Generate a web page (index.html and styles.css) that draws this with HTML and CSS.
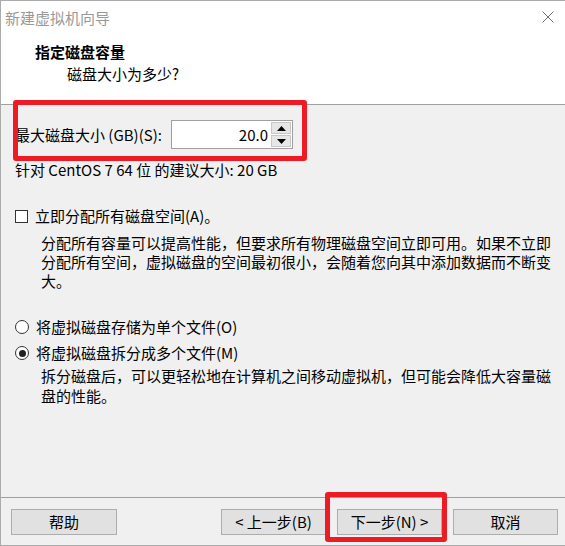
FILE: index.html
```html
<!DOCTYPE html>
<html lang="zh-CN">

<head>
    <meta charset="UTF-8">
    <meta name="viewport" content="width=device-width, initial-scale=1.0">
    <title>新建虚拟机向导</title>
    <link rel="stylesheet" href="styles.css">
</head>

<body>
    <div class="window">
        <div class="head">
            <div class="titlebar">
                <span class="title">新建虚拟机向导</span>
                <svg class="close" width="12" height="12" viewBox="0 0 12 12">
                    <path d="M0.5 0.5 L11.5 11.5 M11.5 0.5 L0.5 11.5" stroke="#707070" stroke-width="1" fill="none" />
                </svg>
            </div>
            <div class="step-title">指定磁盘容量</div>
            <div class="step-sub">磁盘大小为多少?</div>
        </div>

        <div class="content">
            <div class="size-row">
                <label class="size-label">最大磁盘大小 (GB)(S):</label>
                <div class="spin">
                    <div class="spin-value">20.0</div>
                    <div class="spin-btns">
                        <div class="spin-btn">
                            <svg width="9" height="5" viewBox="0 0 9 5"><path d="M0 5 L4.5 0 L9 5 Z" fill="#000" /></svg>
                        </div>
                        <div class="spin-btn">
                            <svg width="9" height="5" viewBox="0 0 9 5"><path d="M0 0 L9 0 L4.5 5 Z" fill="#000" /></svg>
                        </div>
                    </div>
                </div>
            </div>
            <div class="hint">针对 CentOS 7 64 位 的建议大小: 20 GB</div>

            <div class="option check-row">
                <span class="checkbox"></span>
                <span>立即分配所有磁盘空间(A)。</span>
            </div>
            <p class="desc first">分配所有容量可以提高性能，但要求所有物理磁盘空间立即可用。如果不立即<br>分配所有空间，虚拟磁盘的空间最初很小，会随着您向其中添加数据而不断变<br>大。</p>

            <div class="option radio-one">
                <span class="radio"></span>
                <span>将虚拟磁盘存储为单个文件(O)</span>
            </div>
            <div class="option radio-two">
                <span class="radio checked"></span>
                <span>将虚拟磁盘拆分成多个文件(M)</span>
            </div>
            <p class="desc second">拆分磁盘后，可以更轻松地在计算机之间移动虚拟机，但可能会降低大容量磁<br>盘的性能。</p>
        </div>

        <div class="footer">
            <button class="btn help">帮助</button>
            <div class="nav">
                <button class="btn">&lt; 上一步(B)</button>
                <button class="btn">下一步(N) &gt;</button>
                <button class="btn">取消</button>
            </div>
        </div>

        <div class="mark mark-size"></div>
        <div class="mark mark-next"></div>
    </div>
</body>

</html>
```

FILE: styles.css
```css
body {
    margin: 0;
    padding: 0;
    background: #f0f0f0;
    font-family: "Microsoft YaHei", "Noto Sans CJK SC", sans-serif;
    font-size: 15px;
    color: #000;
}

.window {
    position: relative;
    width: 565px;
    height: 546px;
    box-sizing: border-box;
    border-top: 1px solid #ababab;
    border-left: 1px solid #ababab;
    border-bottom: 1px solid #ababab;
    background: #f0f0f0;
    display: flex;
    flex-direction: column;
}

.head {
    background: #fff;
    height: 104px;
    box-sizing: border-box;
    padding-top: 7px;
    border-bottom: 1px solid #a0a0a0;
}

.titlebar {
    display: flex;
    justify-content: space-between;
    align-items: center;
    height: 20px;
    padding-left: 4px;
    padding-right: 11px;
}

.title {
    color: #999;
    line-height: 20px;
}

.close {
    margin-top: -2px;
}

.step-title {
    font-weight: bold;
    line-height: 20px;
    margin-top: 14px;
    padding-left: 34px;
}

.step-sub {
    line-height: 20px;
    margin-top: 2px;
    padding-left: 66px;
}

.content {
    flex: 1;
    padding-left: 14px;
}

.size-row {
    display: flex;
    align-items: center;
    margin-top: 15px;
    height: 29px;
}

.size-label {
    width: 156px;
    line-height: 20px;
}

.spin {
    display: flex;
    width: 122px;
    height: 29px;
    box-sizing: border-box;
    border: 1px solid #a0a0a0;
    background: #fff;
}

.spin-value {
    flex: 1;
    text-align: right;
    line-height: 27px;
    padding-right: 3px;
}

.spin-btns {
    width: 20px;
    display: flex;
    flex-direction: column;
    gap: 1px;
    padding: 1px 1px 1px 0;
}

.spin-btn {
    flex: 1;
    background: #e6e6e6;
    border: 1px solid #c8c8c8;
    display: flex;
    align-items: center;
    justify-content: center;
}

.hint {
    line-height: 20px;
    margin-top: 11px;
}

.option {
    display: flex;
    align-items: center;
    gap: 7px;
    line-height: 20px;
}

.check-row {
    margin-top: 26px;
}

.checkbox {
    width: 13px;
    height: 13px;
    box-sizing: border-box;
    border: 1px solid #333;
    background: #fff;
}

.radio {
    width: 14px;
    height: 14px;
    box-sizing: border-box;
    border: 1px solid #333;
    border-radius: 50%;
    background: #fff;
    display: flex;
    align-items: center;
    justify-content: center;
}

.radio.checked::after {
    content: "";
    width: 7px;
    height: 7px;
    border-radius: 50%;
    background: #222;
}

.desc {
    margin: 0;
    padding-left: 26px;
    line-height: 19px;
}

.desc.first {
    margin-top: 7px;
}

.radio-one {
    margin-top: 27px;
}

.radio-two {
    margin-top: 6px;
}

.desc.second {
    margin-top: 3px;
    line-height: 20px;
}

.footer {
    height: 48px;
    box-sizing: border-box;
    border-top: 1px solid #a0a0a0;
    display: flex;
    align-items: flex-start;
    padding: 11px 7px 0 10px;
}

.nav {
    margin-left: auto;
    display: flex;
    gap: 11px;
}

.btn {
    width: 105px;
    height: 26px;
    box-sizing: border-box;
    border: 1px solid #adadad;
    background: #e1e1e1;
    font-family: inherit;
    font-size: 15px;
    line-height: 22px;
    padding: 0;
    color: #000;
}

.btn.help {
    width: 106px;
}

.mark {
    position: absolute;
    box-sizing: border-box;
    border: 5px solid #ed1c24;
    border-radius: 3px;
}

.mark-size {
    left: 12px;
    top: 99px;
    width: 294px;
    height: 61px;
}

.mark-next {
    left: 324px;
    top: 491px;
    width: 122px;
    height: 50px;
}
```
